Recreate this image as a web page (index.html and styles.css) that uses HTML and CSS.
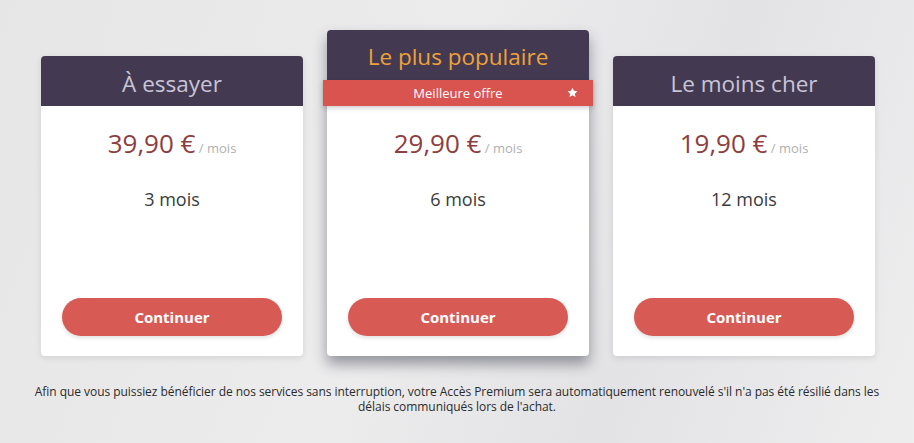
FILE: index.html
```html
<!DOCTYPE html>
<html lang="fr">
<head>
<meta charset="utf-8">
<title>Offres</title>
<link rel="stylesheet" href="styles.css">
</head>
<body>
<div class="page">
  <div class="plans">
    <div class="card">
      <div class="card-head"><h2 class="title">À essayer</h2></div>
      <div class="card-body">
        <div class="price"><span class="amount">39,90 €</span><span class="per"> / mois</span></div>
        <div class="duration">3 mois</div>
        <button class="btn">Continuer</button>
      </div>
    </div>
    <div class="card card-featured">
      <div class="card-head"><h2 class="title title-featured">Le plus populaire</h2></div>
      <div class="ribbon">
        <span>Meilleure offre</span>
        <svg class="star" viewBox="0 0 24 24" width="11" height="11"><path d="M12 1.5l3.2 6.9 7.5.9-5.5 5.2 1.4 7.4L12 18.2l-6.6 3.7 1.4-7.4L1.3 9.3l7.5-.9z" fill="#fff"/></svg>
      </div>
      <div class="card-body">
        <div class="price"><span class="amount">29,90 €</span><span class="per"> / mois</span></div>
        <div class="duration">6 mois</div>
        <button class="btn">Continuer</button>
      </div>
    </div>
    <div class="card">
      <div class="card-head"><h2 class="title">Le moins cher</h2></div>
      <div class="card-body">
        <div class="price"><span class="amount">19,90 €</span><span class="per"> / mois</span></div>
        <div class="duration">12 mois</div>
        <button class="btn">Continuer</button>
      </div>
    </div>
  </div>
  <p class="notice">Afin que vous puissiez bénéficier de nos services sans interruption, votre Accès Premium sera automatiquement renouvelé s'il n'a pas été résilié dans les délais communiqués lors de l'achat.</p>
</div>
</body>
</html>
```
FILE: styles.css
```css
* { box-sizing: border-box; }
html, body { margin: 0; padding: 0; }
body {
  width: 914px;
  height: 443px;
  overflow: hidden;
  font-family: "Open Sans", "Noto Sans", sans-serif;
  background: linear-gradient(110deg, #e6e6e7 0%, #ececed 45%, #e3e3e5 70%, #eeeeef 100%);
}
.page { padding-top: 30px; }
.plans {
  display: flex;
  justify-content: center;
  align-items: flex-end;
  gap: 24px;
  padding-left: 2px;
}
.card {
  width: 262px;
  background: #fff;
  border-radius: 4px;
  box-shadow: 0 2px 6px rgba(0,0,0,0.10);
  display: flex;
  flex-direction: column;
}
.card-featured {
  box-shadow: 0 8px 14px rgba(40,40,60,0.45);
}
.card-head {
  height: 50px;
  background: #433a52;
  border-radius: 4px 4px 0 0;
  display: flex;
  align-items: center;
  justify-content: center;
}
.title {
  margin: 0;
  font-size: 22.5px;
  font-weight: 400;
  color: #c9c4d6;
  line-height: 1;
  padding-top: 6px;
}
.title-featured { color: #eea23a; padding-top: 4px; }
.ribbon {
  height: 26px;
  margin: 0 -4px;
  background: #d9534f;
  box-shadow: 0 2px 5px rgba(0,0,0,0.2);
  display: flex;
  align-items: center;
  justify-content: center;
  position: relative;
  color: #fff;
  font-size: 13px;
}
.star {
  position: absolute;
  right: 15px;
  top: 7px;
}
.card-body {
  height: 250px;
  display: flex;
  flex-direction: column;
  align-items: center;
  padding-top: 19px;
  padding-bottom: 20px;
}
.price {
  line-height: 36px;
  display: flex;
  align-items: baseline;
}
.amount {
  font-size: 26px;
  color: #8e3e3e;
}
.per {
  font-size: 13px;
  color: #b0b0b0;
  white-space: pre;
}
.duration {
  margin-top: 21px;
  font-size: 18px;
  line-height: 25px;
  color: #3a3a3a;
}
.btn {
  margin-top: auto;
  width: 220px;
  height: 38px;
  border: none;
  border-radius: 19px;
  background: #d75a55;
  box-shadow: 0 2px 4px rgba(0,0,0,0.12);
  color: #fff;
  font-family: "Open Sans", "Noto Sans", sans-serif;
  font-weight: 700;
  font-size: 15px;
}
.notice {
  margin: 29px auto 0;
  width: 862px;
  text-align: center;
  font-size: 12px;
  line-height: 14.5px;
  color: #2a2a2a;
  letter-spacing: -0.05px;
}
```
